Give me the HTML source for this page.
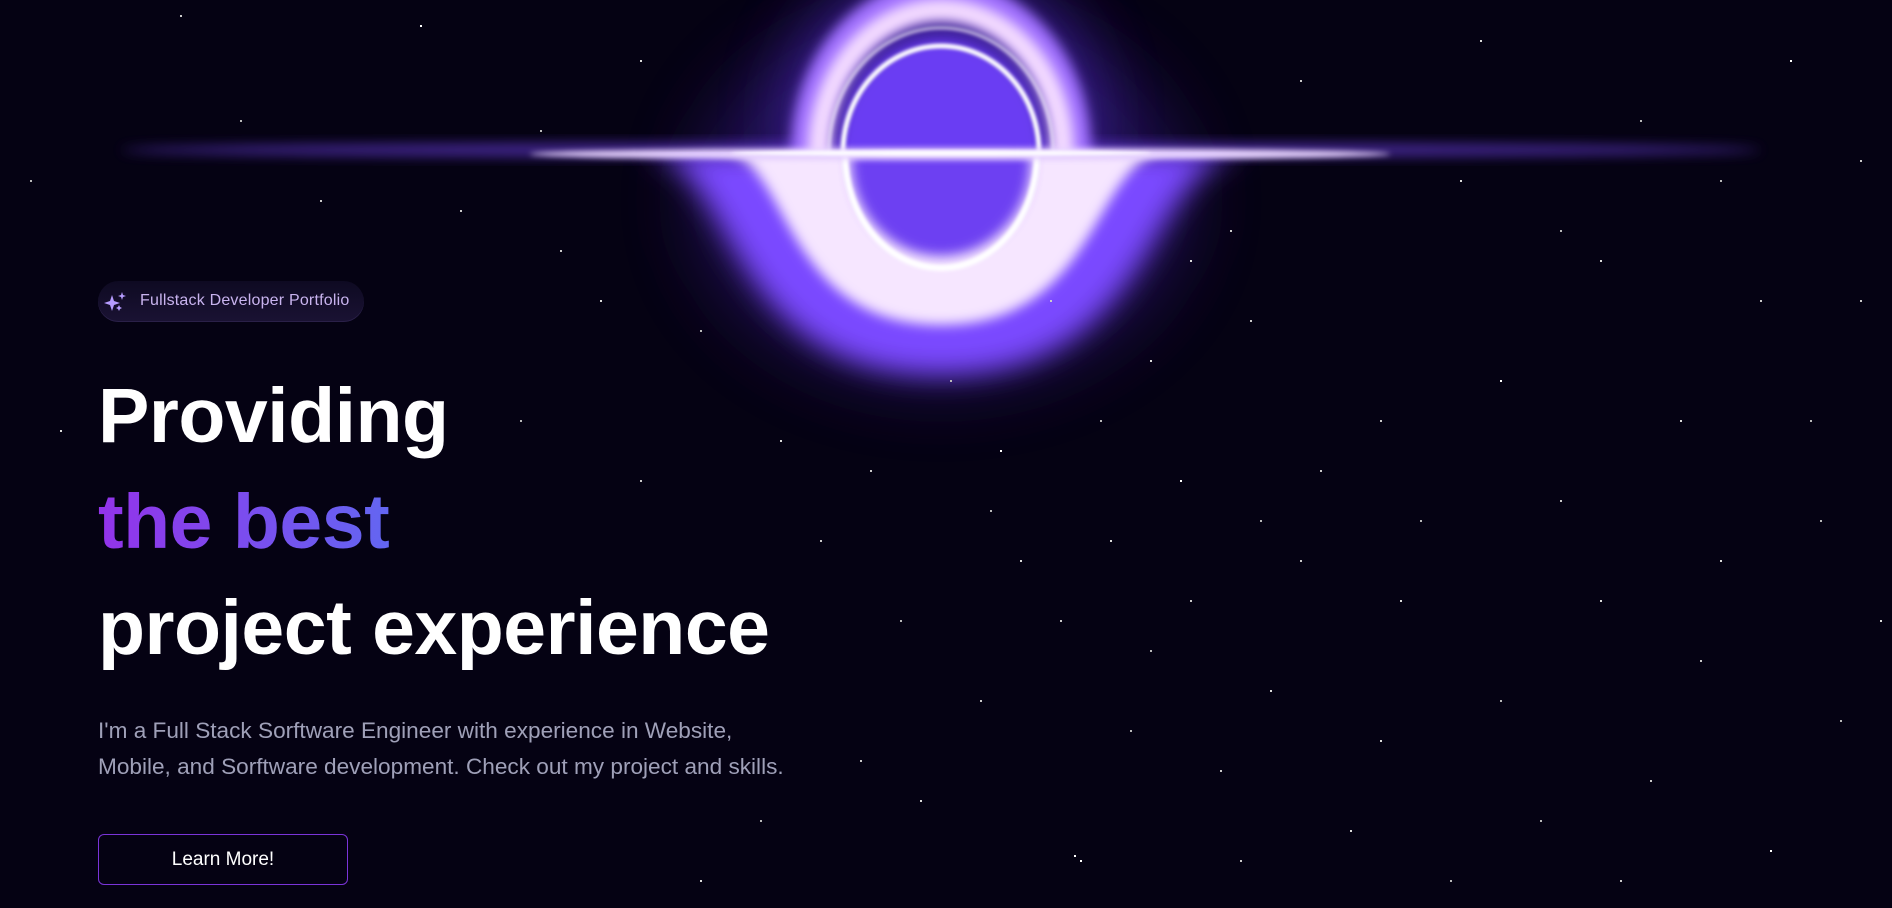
<!DOCTYPE html>
<html><head><meta charset="utf-8"><style>
html,body{margin:0;padding:0;width:1892px;height:908px;overflow:hidden;background:#050213;font-family:"Liberation Sans",sans-serif}
.bg{position:absolute;inset:0}
.stars{position:absolute;left:0;top:0;width:2px;height:2px;background:transparent;
box-shadow:420px 25px #fff,180px 15px #ccc,1790px 60px #fff,1720px 180px #bbb,1600px 260px #ddd,1250px 320px #ccc,1100px 420px #bbb,1180px 480px #fff,1300px 560px #ccc,1400px 600px #ddd,1500px 700px #bbb,1650px 780px #ccc,1770px 850px #fff,1080px 860px #fff,980px 700px #ccc,900px 620px #bbb,1020px 560px #ddd,860px 760px #ccc,760px 820px #bbb,700px 880px #ddd,1220px 770px #ccc,1350px 830px #ddd,1450px 880px #bbb,1560px 500px #ccc,1680px 420px #ddd,1820px 520px #bbb,1860px 300px #ccc,1500px 380px #fff,1380px 420px #ccc,1150px 360px #ddd,1050px 300px #ccc,700px 330px #bbb,600px 300px #ddd,560px 250px #ccc,520px 420px #bbb,640px 480px #ccc,780px 440px #ddd,820px 540px #ccc,1150px 650px #bbb,1270px 690px #ddd,1320px 470px #ccc,1420px 520px #bbb,1600px 600px #ddd,1700px 660px #ccc,1840px 720px #bbb,1880px 620px #ddd,1760px 300px #ccc,1640px 120px #bbb,1480px 40px #ddd,1300px 80px #ccc,240px 120px #bbb,320px 200px #ccc,60px 430px #ddd,30px 180px #bbb,1230px 230px #ccc,1190px 260px #ddd,990px 510px #bbb,1060px 620px #ccc,920px 800px #ddd,1130px 730px #bbb,1240px 860px #ccc,1380px 740px #ddd,1540px 820px #bbb,1620px 880px #ccc,1720px 560px #ddd,1810px 420px #bbb,1860px 160px #ccc,640px 60px #ddd,540px 130px #bbb,460px 210px #ccc,1460px 180px #ddd,1560px 230px #bbb,1000px 450px #fff,870px 470px #ccc,950px 380px #bbb,1110px 540px #ddd,1190px 600px #ccc,1260px 520px #bbb,1074px 855px #fff}
.badge{position:absolute;left:98px;top:281px;width:266px;height:41px;border-radius:21px;background:linear-gradient(#0e0a22,#1a1233);box-shadow:inset 0 -1px 0 #2a2048}
.badge span{position:absolute;left:42px;top:11px;font-size:16px;color:#c8b3ee;letter-spacing:.2px}
h1{position:absolute;left:98px;top:363px;margin:0;font-size:77px;line-height:106px;font-weight:bold;color:#fff;letter-spacing:-0.5px}
.grad{background:linear-gradient(90deg,#9333ea,#6366f1);-webkit-background-clip:text;background-clip:text;color:transparent}
p{position:absolute;left:98px;top:713px;margin:0;font-size:22.6px;line-height:36px;color:#9fa0b8;width:820px}
.btn{position:absolute;left:98px;top:834px;width:250px;height:51px;border:1px solid #7a34d8;border-radius:6px;box-sizing:border-box;color:#fff;font-size:19px;text-align:center;line-height:49px}
</style></head><body>
<svg class="bg" width="1892" height="908" viewBox="0 0 1892 908">
<defs>
<filter id="b40" x="-50%" y="-50%" width="200%" height="200%"><feGaussianBlur stdDeviation="35"/></filter>
<filter id="b15" x="-50%" y="-50%" width="200%" height="200%"><feGaussianBlur stdDeviation="14"/></filter>
<filter id="b6" x="-50%" y="-50%" width="200%" height="200%"><feGaussianBlur stdDeviation="6"/></filter>
<filter id="b3" x="-50%" y="-50%" width="200%" height="200%"><feGaussianBlur stdDeviation="3"/></filter>
<filter id="b2" x="-50%" y="-50%" width="200%" height="200%"><feGaussianBlur stdDeviation="1.5"/></filter>
<clipPath id="top"><rect x="0" y="0" width="1892" height="152"/></clipPath>
<clipPath id="bot"><rect x="0" y="152" width="1892" height="800"/></clipPath>
</defs>
<ellipse cx="941" cy="200" rx="250" ry="190" fill="#3b1a8f" opacity=".45" filter="url(#b40)"/>
<ellipse cx="941" cy="120" rx="150" ry="150" fill="#5a2ee0" opacity=".6" filter="url(#b40)"/>
<ellipse cx="941" cy="150" rx="820" ry="8" fill="#6b3ee0" opacity=".6" filter="url(#b6)"/>
<g clip-path="url(#top)">
<ellipse cx="941" cy="150" rx="100" ry="110" fill="#6a3cf3" filter="url(#b6)"/>
<ellipse cx="941" cy="152" rx="132" ry="155" fill="none" stroke="#a070ff" stroke-width="36" filter="url(#b6)"/>
<ellipse cx="941" cy="152" rx="122" ry="142" fill="none" stroke="#f4dcff" stroke-width="22" filter="url(#b6)"/>
<ellipse cx="941" cy="152" rx="98" ry="106" fill="none" stroke="#fff" stroke-width="5" filter="url(#b2)"/>
<ellipse cx="941" cy="152" rx="112" ry="124" fill="none" stroke="#fff" stroke-width="3" opacity=".6" filter="url(#b2)"/>
</g>
<g clip-path="url(#bot)">
<path d="M640 150 C740 160 720 375 941 375 C1162 375 1142 160 1250 150 Z" fill="#7a48ff" filter="url(#b15)"/>
<path d="M720 150 C790 155 780 325 941 325 C1102 325 1092 155 1170 150 Z" fill="#f6e6ff" filter="url(#b6)"/>
<ellipse cx="941" cy="160" rx="90" ry="96" fill="#6d3ff2" filter="url(#b6)"/>
<ellipse cx="941" cy="154" rx="96" ry="114" fill="none" stroke="#fff" stroke-width="6" filter="url(#b2)"/>
</g>
<ellipse cx="960" cy="154" rx="430" ry="6" fill="#e8d4ff" filter="url(#b3)"/>
<ellipse cx="941" cy="153" rx="210" ry="2.5" fill="#fff" filter="url(#b2)"/>
</svg>
<div class="stars"></div>
<div class="badge">
<svg style="position:absolute;left:4px;top:9px" width="28" height="24" viewBox="0 0 28 24">
<path d="M10 5 L12 11 L18 13 L12 15 L10 21 L8 15 L2 13 L8 11 Z" fill="#b69cff"/>
<path d="M20 2 L21 5 L24 6 L21 7 L20 10 L19 7 L16 6 L19 5 Z" fill="#b69cff"/>
<path d="M17 15 L18 17 L20 18 L18 19 L17 21 L16 19 L14 18 L16 17 Z" fill="#b69cff"/>
</svg>
<span>Fullstack Developer Portfolio</span></div>
<h1>Providing<br><span class="grad">the best</span><br>project experience</h1>
<p>I'm a Full Stack Sorftware Engineer with experience in Website,<br>Mobile, and Sorftware development. Check out my project and skills.</p>
<div class="btn">Learn More!</div>
</body></html>
